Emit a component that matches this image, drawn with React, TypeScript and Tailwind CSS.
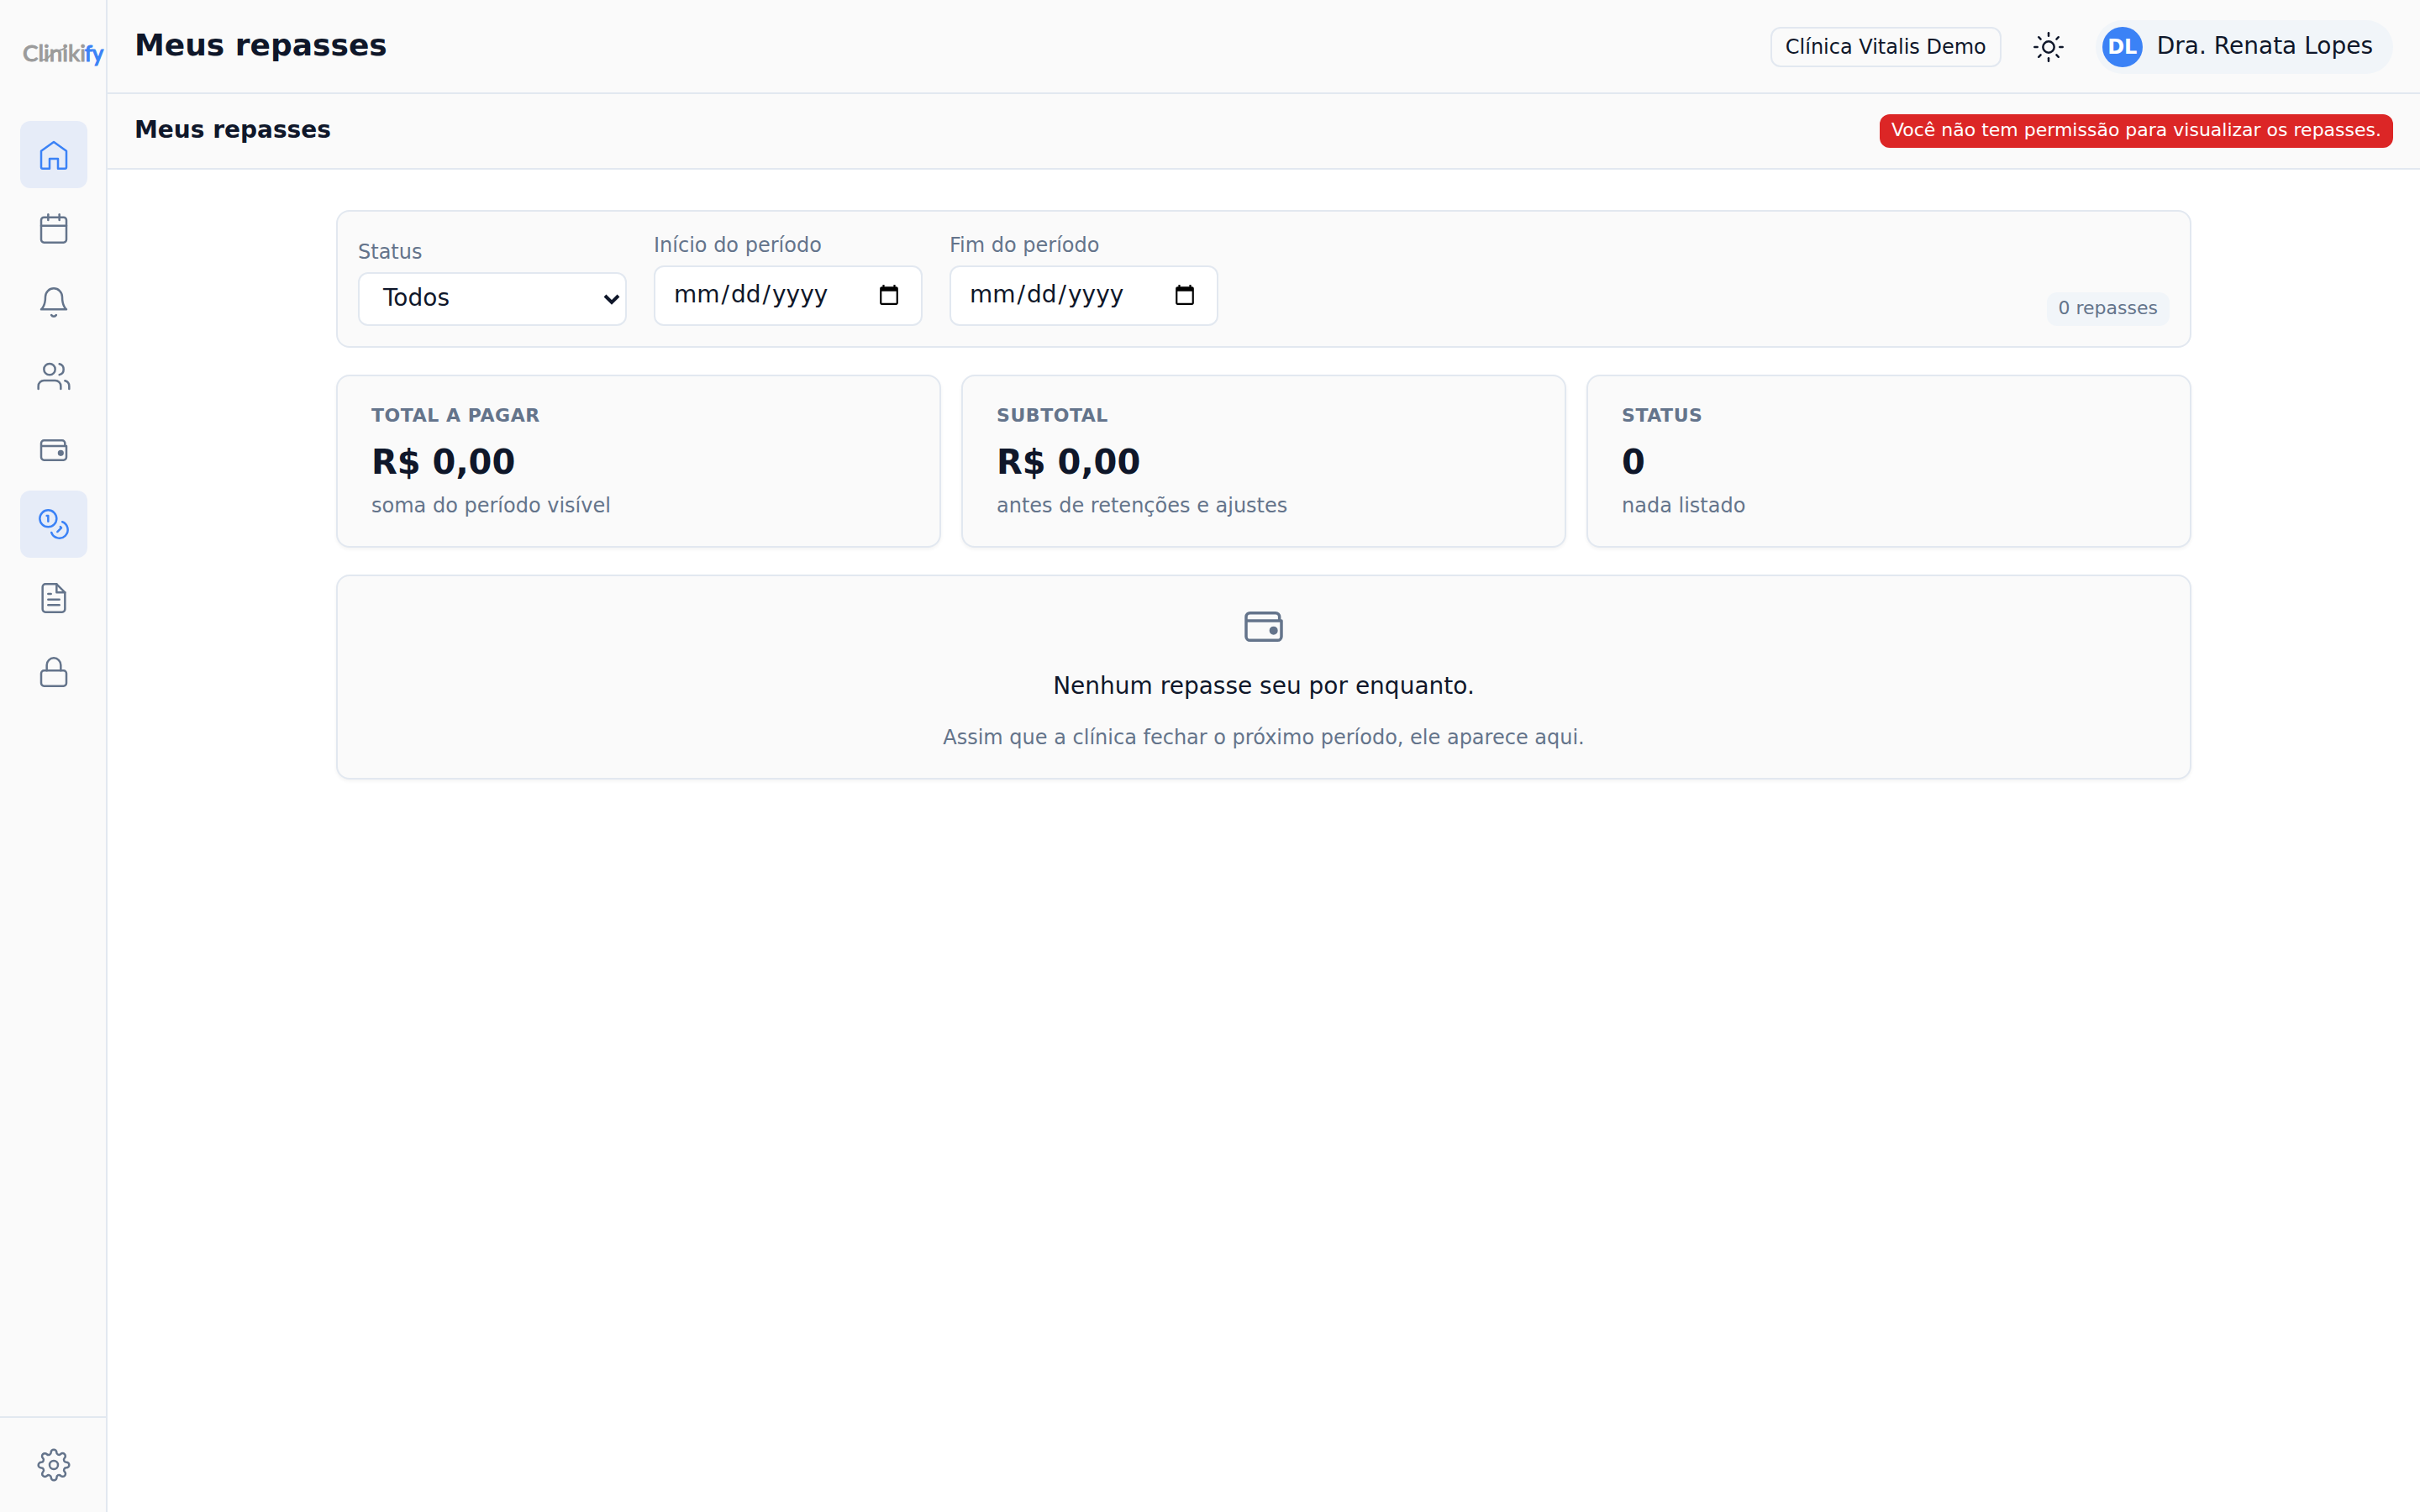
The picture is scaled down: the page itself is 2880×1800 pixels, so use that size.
import type { ReactNode } from "react";
import { Sun } from "lucide-react";
import { FiBell, FiCalendar, FiFileText, FiLock, FiSettings, FiUsers } from "react-icons/fi";

function Svg({ size = 40, children }: { size?: number; children: ReactNode }) {
  return (
    <svg
      width={size}
      height={size}
      viewBox="0 0 24 24"
      fill="none"
      stroke="currentColor"
      strokeWidth={1.5}
      strokeLinecap="round"
      strokeLinejoin="round"
    >
      {children}
    </svg>
  );
}

function HomeIcon() {
  return (
    <Svg>
      <path d="M3 9.5 12 3l9 6.5V21a1 1 0 0 1-1 1h-5v-7H9v7H4a1 1 0 0 1-1-1z" />
    </Svg>
  );
}

function WalletIcon({ size = 40 }: { size?: number }) {
  return (
    <Svg size={size}>
      <path d="M20 9V7a2 2 0 0 0-2-2H5a2 2 0 0 0-2 2v10a2 2 0 0 0 2 2h14a2 2 0 0 0 2-2V9H3" />
      <circle cx="17" cy="14" r="1.4" fill="currentColor" />
    </Svg>
  );
}

function CoinsIcon() {
  return (
    <Svg>
      <circle cx="8" cy="8" r="6" />
      <path d="M18.09 10.37A6 6 0 1 1 10.34 18" />
      <path d="M7 6h1v4" />
      <path d="m16.71 13.88.7.71-2.82 2.82" />
    </Svg>
  );
}

function Logo() {
  return (
    <svg width="98" height="48" viewBox="0 0 98 48" className="shrink-0 overflow-visible">
      <g fontFamily="Lato, sans-serif" fontSize="26" fontWeight="500">
        <text x="-1" y="32" fill="#9b9b9b" stroke="#9b9b9b" strokeWidth="0.9" textLength="75" lengthAdjust="spacingAndGlyphs">
          Cliniki
        </text>
        <text x="73" y="32" fill="#3b82f6" stroke="#3b82f6" strokeWidth="1.2" textLength="22" lengthAdjust="spacingAndGlyphs">
          fy
        </text>
      </g>
      <path
        d="M20 30c8 2 10-4 15-8 4-3 7-3 11-4 2-.6 4-2 5-4"
        fill="none"
        stroke="#9b9b9b"
        strokeWidth="1.9"
        strokeLinecap="round"
      />
    </svg>
  );
}

const NAV = [
  { name: "home", icon: <HomeIcon />, active: true },
  { name: "agenda", icon: <FiCalendar size={40} strokeWidth={1.5} /> },
  { name: "avisos", icon: <FiBell size={40} strokeWidth={1.5} /> },
  { name: "pacientes", icon: <FiUsers size={40} strokeWidth={1.5} /> },
  { name: "financeiro", icon: <WalletIcon /> },
  { name: "repasses", icon: <CoinsIcon />, active: true },
  { name: "documentos", icon: <FiFileText size={40} strokeWidth={1.5} /> },
  { name: "acessos", icon: <FiLock size={40} strokeWidth={1.5} /> },
];

function Sidebar() {
  return (
    <aside className="flex w-32 shrink-0 flex-col border-r-2 border-[#e2e8f0] bg-[#fafafa] text-[#64748b]">
      <div className="flex h-36 items-start pt-[41px] pl-7">
        <Logo />
      </div>
      <nav className="flex flex-1 flex-col gap-2 px-6">
        {NAV.map((item) => (
          <a
            key={item.name}
            className={
              item.active
                ? "flex size-20 items-center justify-center rounded-xl bg-[#e6ecf8] text-[#3b82f6]"
                : "flex size-20 items-center justify-center rounded-xl"
            }
          >
            {item.icon}
          </a>
        ))}
      </nav>
      <div className="flex h-[114px] items-center justify-center border-t-2 border-[#e2e8f0] pl-0.5">
        <FiSettings size={40} strokeWidth={1.5} />
      </div>
    </aside>
  );
}

function Header() {
  return (
    <header className="flex h-28 items-center justify-between border-b-2 border-[#e2e8f0] bg-[#fafafa] px-8 pt-0.5">
      <h1 className="-mt-1 text-[36px] leading-[48px] font-bold">Meus repasses</h1>
      <div className="flex items-center gap-4">
        <span className="flex h-12 items-center rounded-xl border-2 border-[#e2e8f0] px-4 text-2xl leading-8">
          Clínica Vitalis Demo
        </span>
        <button className="flex size-20 items-center justify-center">
          <Sun size={40} strokeWidth={1.5} />
        </button>
        <div className="flex h-16 items-center gap-[17px] rounded-full bg-[#f1f5f9] pr-6 pl-2">
          <span className="flex size-12 items-center justify-center rounded-full bg-[#3b82f6] text-2xl leading-8 font-bold text-white">
            DL
          </span>
          <span className="-mt-0.5 text-[28px] leading-10">Dra. Renata Lopes</span>
        </div>
      </div>
    </header>
  );
}

function Field({ label, children }: { label: string; children: ReactNode }) {
  return (
    <label className="flex w-80 flex-col gap-2">
      <span className="text-2xl leading-8 text-[#64748b]">{label}</span>
      {children}
    </label>
  );
}

function DateField({ label }: { label: string }) {
  return (
    <Field label={label}>
      <span className="flex h-[72px] items-center justify-between rounded-xl border-2 border-[#e2e8f0] bg-white pr-[25px] pl-5 text-[28px] leading-8">
        <span className="-mt-0.5 flex">
          <span className="px-0.5">mm</span>/<span className="px-0.5">dd</span>/
          <span className="px-0.5">yyyy</span>
        </span>
        <svg width="26" height="26" viewBox="0 0 24 24" fill="#000" className="-mt-0.5">
          <path d="M20 3h-1V1h-2v2H7V1H5v2H4c-1.1 0-2 .9-2 2v16c0 1.1.9 2 2 2h16c1.1 0 2-.9 2-2V5c0-1.1-.9-2-2-2zm0 18H4V8h16v13z" />
        </svg>
      </span>
    </Field>
  );
}

function Filters() {
  return (
    <section className="flex items-end justify-between rounded-2xl border-2 border-[#e2e8f0] bg-[#fafafa] p-6">
      <div className="flex items-end gap-8">
        <Field label="Status">
          <span className="flex h-16 items-center justify-between rounded-xl border-2 border-[#e2e8f0] bg-white pr-1.5 pl-7 text-[28px] leading-8">
            <span className="-mt-0.5">Todos</span>
            <svg width="20" height="14" viewBox="0 0 20 14" fill="none" stroke="currentColor" strokeWidth="4">
              <path d="m2 3 8 8 8-8" />
            </svg>
          </span>
        </Field>
        <DateField label="Início do período" />
        <DateField label="Fim do período" />
      </div>
      <span className="flex h-10 items-center rounded-xl bg-[#f1f5f9] px-3.5 text-[22px] leading-8 text-[#64748b]">
        <span className="-mt-0.5">0 repasses</span>
      </span>
    </section>
  );
}

function StatCard({ label, value, hint }: { label: string; value: string; hint: string }) {
  return (
    <div className="rounded-2xl border-2 border-[#e2e8f0] bg-[#fafafa] px-10 py-8 shadow-[0_2px_4px_rgba(0,0,0,0.05)]">
      <div className="pt-px text-[22px] leading-7 font-bold tracking-[0.025em] text-[#64748b] uppercase">{label}</div>
      <div className="mt-[17px] text-[40px] leading-12 font-bold">{value}</div>
      <div className="mt-3 text-2xl leading-8 text-[#64748b]">{hint}</div>
    </div>
  );
}

export default function App() {
  return (
    <div className="flex h-screen w-full bg-white font-['DejaVu_Sans',sans-serif] text-[#0f172a]">
      <Sidebar />
      <div className="flex min-w-0 flex-1 flex-col">
        <Header />
        <div className="flex h-[90px] items-center justify-between border-b-2 border-[#e2e8f0] bg-[#fafafa] px-8">
          <h2 className="-mt-0.5 text-[28px] leading-10 font-bold">Meus repasses</h2>
          <span className="flex h-10 items-center rounded-xl bg-[#dc2626] px-3.5 text-[22px] leading-8 text-white">
            <span className="-mt-0.5">Você não tem permissão para visualizar os repasses.</span>
          </span>
        </div>
        <main className="mx-auto flex w-[2208px] flex-col gap-8 pt-12">
          <Filters />
          <section className="grid grid-cols-3 gap-6">
            <StatCard label="Total a pagar" value="R$ 0,00" hint="soma do período visível" />
            <StatCard label="Subtotal" value="R$ 0,00" hint="antes de retenções e ajustes" />
            <StatCard label="Status" value="0" hint="nada listado" />
          </section>
          <section className="flex flex-col items-center rounded-2xl border-2 border-[#e2e8f0] bg-[#fafafa] py-8 shadow-[0_2px_4px_rgba(0,0,0,0.05)]">
            <span className="text-[#64748b]">
              <WalletIcon size={56} />
            </span>
            <p className="mt-[23px] text-[28px] leading-10">Nenhum repasse seu por enquanto.</p>
            <p className="mt-[25px] text-2xl leading-8 text-[#64748b]">
              Assim que a clínica fechar o próximo período, ele aparece aqui.
            </p>
          </section>
        </main>
      </div>
    </div>
  );
}
